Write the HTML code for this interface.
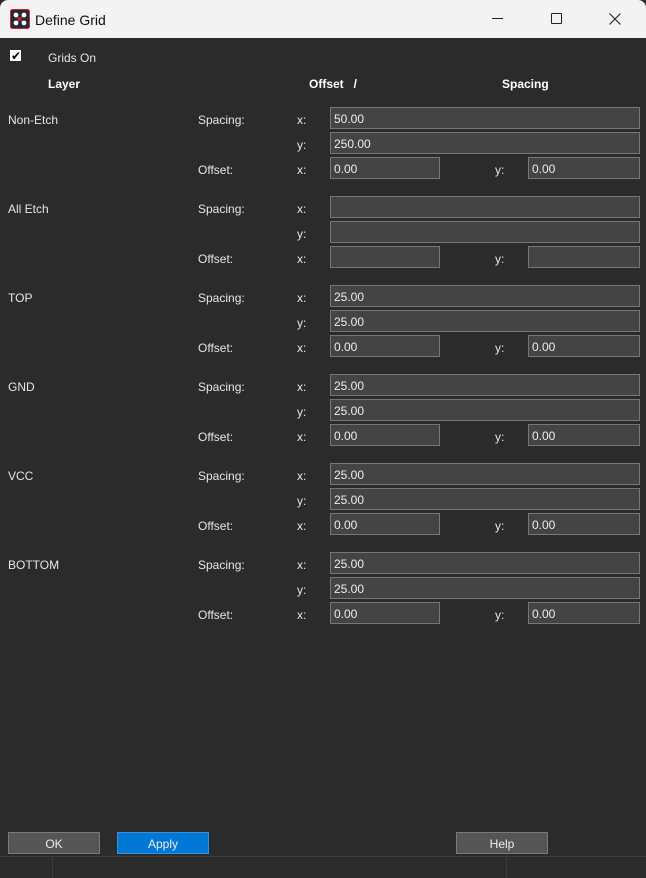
<!DOCTYPE html>
<html><head><meta charset="utf-8"><style>
*{margin:0;padding:0;box-sizing:border-box}
body{width:646px;height:878px;background:#2b2b2b;font-family:"Liberation Sans",sans-serif;font-size:12px;color:#e6e6e6;position:relative;overflow:hidden}
.t{position:absolute;white-space:nowrap;line-height:14px;margin-top:1px}
.title{position:absolute;left:0;top:0;width:646px;height:38px;background:#f3f3f3;border-radius:8px 8px 0 0}
.in{position:absolute;background:#444;border:1px solid #777;height:22px;padding-left:3px;line-height:22px;color:#eee}
.sec{position:absolute;left:0;width:646px;height:80px}
.btn{position:absolute;top:832px;width:92px;height:22px;border:1px solid #7a7a7a;background:#555;text-align:center;line-height:22px;color:#eee}
b{font-weight:bold;color:#fff}
</style></head><body>
<div class="title">
<svg style="position:absolute;left:10px;top:9px" width="20" height="20" viewBox="0 0 20 20"><rect x="0.5" y="0.5" width="19" height="19" rx="2" fill="#1c2b36" stroke="#e0202e"/><line x1="4" y1="5" x2="16" y2="16" stroke="#e0202e" stroke-width="1.5"/><line x1="6" y1="14" x2="14" y2="6" stroke="#e0202e" stroke-width="1.5"/><circle cx="6" cy="6" r="2.4" fill="#fff"/><circle cx="14" cy="6" r="2.4" fill="#fff"/><circle cx="6" cy="14" r="2.4" fill="#fff"/><circle cx="14" cy="14" r="2.4" fill="#fff"/></svg>
<div class="t" style="left:35px;top:11px;font-size:14px;color:#111;line-height:16px">Define Grid</div>
<div style="position:absolute;left:492px;top:18px;width:11px;height:1px;background:#222"></div>
<div style="position:absolute;left:551px;top:13px;width:11px;height:11px;border:1px solid #222;border-radius:1px"></div>
<svg style="position:absolute;left:609px;top:13px" width="12" height="12"><path d="M0.5 0.5L11.5 11.5M11.5 0.5L0.5 11.5" stroke="#222" stroke-width="1.1"/></svg>
</div>
<div style="position:absolute;left:10px;top:50px;width:11px;height:11px;background:#fff"></div>
<div class="t" style="left:11px;top:48px;color:#000;font-size:12px">✔</div>
<div class="t" style="left:48px;top:50px">Grids On</div>
<div class="t" style="left:48px;top:76px"><b>Layer</b></div>
<div class="t" style="left:309px;top:76px"><b>Offset&nbsp;&nbsp;&nbsp;/</b></div>
<div class="t" style="left:502px;top:76px"><b>Spacing</b></div>

<div class="sec" style="top:107px">
<div class="t" style="left:8px;top:5px">Non-Etch</div><div class="t" style="left:198px;top:5px">Spacing:</div><div class="t" style="left:297px;top:5px">x:</div>
<div class="in" style="left:330px;top:0;width:310px">50.00</div>
<div class="t" style="left:297px;top:30px">y:</div><div class="in" style="left:330px;top:25px;width:310px">250.00</div>
<div class="t" style="left:198px;top:55px">Offset:</div><div class="t" style="left:297px;top:55px">x:</div><div class="in" style="left:330px;top:50px;width:110px">0.00</div>
<div class="t" style="left:495px;top:55px">y:</div><div class="in" style="left:528px;top:50px;width:112px">0.00</div></div>

<div class="sec" style="top:196px">
<div class="t" style="left:8px;top:5px">All Etch</div><div class="t" style="left:198px;top:5px">Spacing:</div><div class="t" style="left:297px;top:5px">x:</div>
<div class="in" style="left:330px;top:0;width:310px"></div>
<div class="t" style="left:297px;top:30px">y:</div><div class="in" style="left:330px;top:25px;width:310px"></div>
<div class="t" style="left:198px;top:55px">Offset:</div><div class="t" style="left:297px;top:55px">x:</div><div class="in" style="left:330px;top:50px;width:110px"></div>
<div class="t" style="left:495px;top:55px">y:</div><div class="in" style="left:528px;top:50px;width:112px"></div></div>

<div class="sec" style="top:285px">
<div class="t" style="left:8px;top:5px">TOP</div><div class="t" style="left:198px;top:5px">Spacing:</div><div class="t" style="left:297px;top:5px">x:</div>
<div class="in" style="left:330px;top:0;width:310px">25.00</div>
<div class="t" style="left:297px;top:30px">y:</div><div class="in" style="left:330px;top:25px;width:310px">25.00</div>
<div class="t" style="left:198px;top:55px">Offset:</div><div class="t" style="left:297px;top:55px">x:</div><div class="in" style="left:330px;top:50px;width:110px">0.00</div>
<div class="t" style="left:495px;top:55px">y:</div><div class="in" style="left:528px;top:50px;width:112px">0.00</div></div>

<div class="sec" style="top:374px">
<div class="t" style="left:8px;top:5px">GND</div><div class="t" style="left:198px;top:5px">Spacing:</div><div class="t" style="left:297px;top:5px">x:</div>
<div class="in" style="left:330px;top:0;width:310px">25.00</div>
<div class="t" style="left:297px;top:30px">y:</div><div class="in" style="left:330px;top:25px;width:310px">25.00</div>
<div class="t" style="left:198px;top:55px">Offset:</div><div class="t" style="left:297px;top:55px">x:</div><div class="in" style="left:330px;top:50px;width:110px">0.00</div>
<div class="t" style="left:495px;top:55px">y:</div><div class="in" style="left:528px;top:50px;width:112px">0.00</div></div>

<div class="sec" style="top:463px">
<div class="t" style="left:8px;top:5px">VCC</div><div class="t" style="left:198px;top:5px">Spacing:</div><div class="t" style="left:297px;top:5px">x:</div>
<div class="in" style="left:330px;top:0;width:310px">25.00</div>
<div class="t" style="left:297px;top:30px">y:</div><div class="in" style="left:330px;top:25px;width:310px">25.00</div>
<div class="t" style="left:198px;top:55px">Offset:</div><div class="t" style="left:297px;top:55px">x:</div><div class="in" style="left:330px;top:50px;width:110px">0.00</div>
<div class="t" style="left:495px;top:55px">y:</div><div class="in" style="left:528px;top:50px;width:112px">0.00</div></div>

<div class="sec" style="top:552px">
<div class="t" style="left:8px;top:5px">BOTTOM</div><div class="t" style="left:198px;top:5px">Spacing:</div><div class="t" style="left:297px;top:5px">x:</div>
<div class="in" style="left:330px;top:0;width:310px">25.00</div>
<div class="t" style="left:297px;top:30px">y:</div><div class="in" style="left:330px;top:25px;width:310px">25.00</div>
<div class="t" style="left:198px;top:55px">Offset:</div><div class="t" style="left:297px;top:55px">x:</div><div class="in" style="left:330px;top:50px;width:110px">0.00</div>
<div class="t" style="left:495px;top:55px">y:</div><div class="in" style="left:528px;top:50px;width:112px">0.00</div></div>

<div class="btn" style="left:8px">OK</div>
<div class="btn" style="left:117px;background:#0078d7;border-color:#3a8fd8">Apply</div>
<div class="btn" style="left:456px">Help</div>
<div style="position:absolute;left:0;top:856px;width:646px;height:1px;background:#3c3c3c"></div>
<div style="position:absolute;left:52px;top:857px;width:1px;height:21px;background:#3c3c3c"></div>
<div style="position:absolute;left:506px;top:857px;width:1px;height:21px;background:#3c3c3c"></div>
</body></html>
